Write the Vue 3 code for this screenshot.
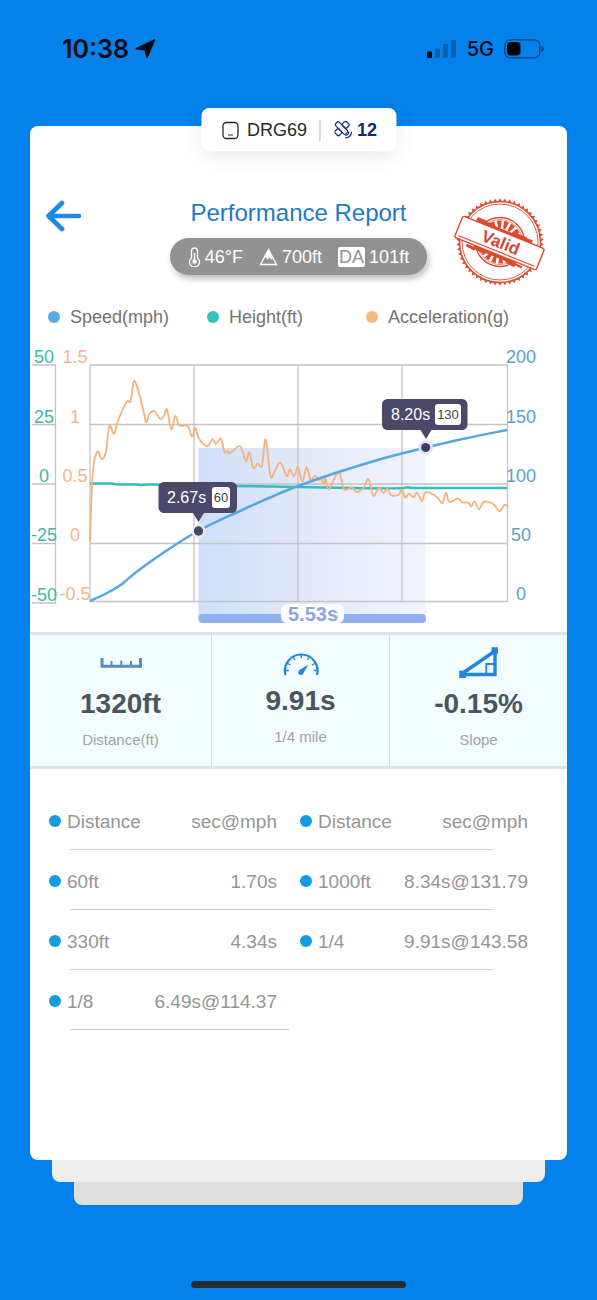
<script setup>
const legend = [
  { name: 'Speed(mph)', tone: 'speed' },
  { name: 'Height(ft)', tone: 'height' },
  { name: 'Acceleration(g)', tone: 'accel' },
]

const heightTicks = [
  { text: '50', y: 363 },
  { text: '25', y: 423 },
  { text: '0', y: 482 },
  { text: '-25', y: 541 },
  { text: '-50', y: 601 },
]
const accelTicks = [
  { text: '1.5', y: 363 },
  { text: '1', y: 423 },
  { text: '0.5', y: 482 },
  { text: '0', y: 541 },
  { text: '-0.5', y: 600 },
]
const speedTicks = [
  { text: '200', y: 363 },
  { text: '150', y: 423 },
  { text: '100', y: 482 },
  { text: '50', y: 541 },
  { text: '0', y: 600 },
]

const accel = [
  [90, 542], [92.7, 473], [97.3, 451.5], [101.7, 459], [106, 451.7], [109.3, 426], [114, 433.7], [118.3, 420],
  [126.7, 401.7], [130.7, 401.3], [134, 380.7], [140, 396.7], [144, 413.3], [146.3, 422.7], [149.3, 414],
  [154.3, 411], [160.3, 419], [164, 415.7], [167, 409.7], [171.3, 429.3], [175.3, 416], [179.3, 425.3],
  [187.7, 426], [192, 436.7], [195.3, 428], [198.7, 438.3], [207.3, 446.3], [212.3, 439], [216, 444],
  [220.9, 438.8], [224.5, 452], [227.5, 451], [230, 453.3], [240, 446.3], [246, 461.3], [249.3, 452.3],
  [253.3, 468], [257.7, 463.7], [262, 465.7], [265.7, 439.3], [270.3, 475.3], [273.5, 474], [278.7, 463.3],
  [282.3, 465.3], [286.7, 476.3], [290, 469.3], [294, 476.7], [298, 467], [302.3, 481.7], [306.7, 467.3],
  [310.7, 480], [315, 475.3], [318.3, 480], [320.7, 478.3], [323.7, 484.3], [325.3, 478.3], [328.7, 489.3],
  [336.7, 474], [339.7, 473.7], [344.3, 489.3], [351.7, 487.3], [356.7, 492], [364, 487.3], [368.5, 479],
  [373.3, 495.7], [379, 487.8], [383.5, 493.3], [387.3, 488.3], [391, 495], [398.3, 495], [401.7, 489.7],
  [405.3, 497.7], [409, 493.7], [413.3, 497.3], [417.3, 492.7], [422, 501.3], [425.7, 492.3], [436.7, 496.7],
  [442.3, 503.3], [446, 492.7], [449.3, 502], [457.7, 498.3], [462, 502.3], [468, 502.7], [471.3, 506.3],
  [474.7, 501.3], [479, 509.3], [484, 501.7], [493.3, 504], [499.3, 511.3], [504.3, 505], [507, 506],
]
const speed = [
  [90, 601], [107, 593], [122, 584], [137, 571.5], [163, 553], [198, 531], [240, 511], [270, 497.5],
  [298, 486], [337, 472.5], [390, 456.5], [426, 447.5], [465, 438.5], [507, 430],
]
const height = [
  [90, 483.5], [112, 483.5], [118, 484.5], [136, 484.5], [142, 485.2], [150, 484.5], [190, 485.5], [240, 486],
  [298, 487], [350, 488], [398, 488.3], [408, 487.3], [420, 488], [507, 488],
]

// Smooth curve through all points, with control handles a fraction of the neighbour distance
function curve(points) {
  let d = `M${points[0][0]} ${points[0][1]}`
  for (let i = 0; i < points.length - 1; i++) {
    const a = points[Math.max(i - 1, 0)]
    const b = points[i]
    const c = points[i + 1]
    const e = points[Math.min(i + 2, points.length - 1)]
    const k = 1 / 6
    d += `C${b[0] + (c[0] - a[0]) * k} ${b[1] + (c[1] - a[1]) * k} ${c[0] - (e[0] - b[0]) * k} ${c[1] - (e[1] - b[1]) * k} ${c[0]} ${c[1]}`
  }
  return d
}

const teeth = Array.from({ length: 54 }, (_, i) => i * (360 / 54))
const spokes = [-150, -132, -112, -92, -72, -52, -32, 30, 48, 68, 88, 108, 128, 148]

const rows = [
  ['60ft', '1.70s', '1000ft', '8.34s@131.79'],
  ['330ft', '4.34s', '1/4', '9.91s@143.58'],
  ['1/8', '6.49s@114.37'],
]
</script>

<template>
  <div class="screen">
    <header class="status">
      <div class="clock">
        <span>10:38</span>
        <svg width="21" height="20" viewBox="0 0 21 20" stroke="#050a14" stroke-width="1.600" stroke-linejoin="round" fill="#050a14" aria-hidden="true">
          <path d="M1.300 9.800 19.500 1 12 18.500 10.200 10.800Z" />
        </svg>
      </div>
      <div class="signals">
        <svg width="30" height="18" viewBox="0 0 30 18" aria-hidden="true">
          <rect x="0" y="11.500" width="5" height="6.500" rx="1.200" />
          <g opacity=".25">
            <rect x="8" y="8.500" width="5" height="9.500" rx="1.200" />
            <rect x="16" y="4" width="5" height="14" rx="1.200" />
            <rect x="24" y="0" width="5" height="18" rx="1.200" />
          </g>
        </svg>
        <span>5G</span>
        <svg width="41" height="20" viewBox="0 0 41 20" aria-hidden="true">
          <rect x=".8" y=".8" width="35" height="18" rx="5.500" fill="none" stroke="#000" stroke-opacity=".5" stroke-width="1.200" />
          <rect x="3" y="3" width="13.500" height="13.500" rx="4" />
          <path d="M37.500 7c3 .8 3 5.200 0 6z" opacity=".5" />
        </svg>
      </div>
    </header>

    <main class="card">
      <div class="tab">
        <svg width="18" height="19" viewBox="0 0 18 19" fill="none" stroke="#24282c" aria-hidden="true">
          <rect x="1.500" y="1.500" width="15" height="16" rx="3.500" stroke-width="1.300" />
          <path d="M6.500 14h5" stroke-width="1.200" />
        </svg>
        <span class="device">DRG69</span>
        <i class="bar"></i>
        <svg width="18" height="18" viewBox="0 0 18 18" fill="none" stroke="#14296a" stroke-width="1.200" stroke-linejoin="round" aria-hidden="true">
          <g transform="rotate(45 7.500 7.500)">
            <rect x="-.5" y="5" width="14.500" height="5" rx="1.500" />
          </g>
          <g transform="rotate(-45 7.500 7.500)">
            <rect x="10" y="4.500" width="5.500" height="6" rx="1.500" />
            <rect x="-.5" y="4.500" width="5.500" height="6" rx="1.500" />
          </g>
          <path d="M10.800 14.300c2-.2 3.400-1.600 3.600-3.600M10.800 17c3.400-.3 6-2.900 6.300-6.300" />
        </svg>
        <span class="sats">12</span>
      </div>

      <section class="head">
        <button class="back" type="button" aria-label="Back">
          <svg width="38" height="32" viewBox="0 0 38 32" fill="none" stroke="#1f8ae6" stroke-width="4.600" stroke-linecap="round" stroke-linejoin="round" aria-hidden="true">
            <path d="M34 16H4M17 3 3.500 16 17 29" />
          </svg>
        </button>
        <div class="middle">
          <h1>Performance Report</h1>
          <div class="weather">
            <span class="fact">
              <svg width="13" height="20" viewBox="0 0 13 20" fill="none" stroke="#fff" aria-hidden="true">
                <path d="M3.500 11V4a3 3 0 0 1 6 0v7a5 5 0 1 1-6 0Z" stroke-width="1.300" />
                <path d="M6.500 6v8" stroke-width="1.300" />
                <circle cx="6.500" cy="14.500" r="2.200" fill="#fff" stroke="none" />
              </svg>46°F
            </span>
            <span class="fact">
              <svg width="19" height="18" viewBox="0 0 19 18" aria-hidden="true">
                <path d="M9.500 1.500 1.500 16.500h16Z" fill="none" stroke="#fff" stroke-width="1.300" />
                <path d="M9.500 1.500 4.500 11l2.500-2 1.500 3 2-3 1.500 2.500 2-1.200Z" fill="#fff" />
              </svg>700ft
            </span>
            <span class="fact"><b class="da">DA</b>101ft</span>
          </div>
        </div>
        <svg class="stamp" width="92" height="92" viewBox="454.500 197 92 92" role="img" aria-label="Valid">
          <g fill="none" stroke="#d94a2f">
            <circle cx="500.500" cy="242" r="40.500" stroke-width="1.500" />
            <circle cx="500.500" cy="242" r="38" stroke-width=".9" />
            <circle cx="500.500" cy="242" r="24.500" stroke-width="1.300" />
            <circle cx="500.500" cy="242" r="22.500" stroke-width=".6" />
          </g>
          <path v-for="t in teeth" :key="t" d="M498.700 201.500l1.800-3.300 1.800 3.300z" fill="#d94a2f" :transform="`rotate(${t} 500.500 242)`" />
          <path v-for="s in spokes" :key="s" d="M514 240.800l8-1.200v4.800l-8-1.200z" fill="#d94a2f" :transform="`rotate(${s} 500.500 242)`" />
          <g transform="rotate(22 500 243)">
            <path d="M470 227h9l1 1.500 6-1 2 1.500h23l1-1.500h11l1 1 6-.5v4h-60zM470 256h7l1-1.500h44l2 1.500h6v2.500l-7-.5-1 2-8-1-2-1.500h-24l-2 1-6-.5-1 1.500-9-1z" fill="#d94a2f" />
            <rect x="456" y="231.500" width="88" height="23" rx="2" fill="#fff" stroke="#d94a2f" stroke-width="1.400" />
            <path d="M459 251.500h82" stroke="#d94a2f" stroke-width="1" />
            <text x="501" y="248" text-anchor="middle" class="valid">Valid</text>
          </g>
        </svg>
      </section>

      <ul class="legend">
        <li v-for="item in legend" :key="item.name"><i :class="item.tone"></i>{{ item.name }}</li>
      </ul>

      <svg class="chart" viewBox="30 340 537 292" role="img" aria-label="Speed, height and acceleration over time">
        <defs>
          <linearGradient id="span-fill" x1="0" x2="1" y1="0" y2="0">
            <stop offset="0" stop-color="#cddff8" />
            <stop offset=".45" stop-color="#e3e8fa" />
            <stop offset="1" stop-color="#f2f4fe" />
          </linearGradient>
        </defs>
        <rect x="198.500" y="448" width="227.500" height="171" fill="url(#span-fill)" />
        <g fill="none" stroke="#c4c4c6" stroke-width="1.300">
          <path d="M90 365H507.500V601.500H90ZM90 424.500H507M90 484H507M90 543.500H507M194 365V601M298 365V601M402 365V601" />
          <path d="M32 365H55.500V603H32M32 424.500H55M32 484H55M32 543.500H55" />
        </g>
        <rect x="198.500" y="614" width="227.500" height="9" rx="4" fill="#8fb1f1" />
        <rect x="281" y="604" width="63" height="19" rx="6" fill="#fff" />
        <text x="313" y="621" text-anchor="middle" class="delta">5.53s</text>

        <g class="tick" fill="#3fb8a9" text-anchor="middle">
          <text v-for="t in heightTicks" :key="t.y" x="44" :y="t.y">{{ t.text }}</text>
        </g>
        <g class="tick" fill="#f0b78b" text-anchor="middle">
          <text v-for="t in accelTicks" :key="t.y" x="75" :y="t.y">{{ t.text }}</text>
        </g>
        <g class="tick" fill="#5a9fca" text-anchor="middle">
          <text v-for="t in speedTicks" :key="t.y" x="521" :y="t.y">{{ t.text }}</text>
        </g>

        <g fill="none" stroke-linejoin="round">
          <path :d="curve(height)" stroke="#35bdbb" stroke-width="2.400" />
          <path :d="curve(accel)" stroke="#f5b27a" stroke-width="1.800" />
          <path :d="curve(speed)" stroke="#57a7dd" stroke-width="2.500" />
        </g>

        <g>
          <path d="M164 482h67.500a5.500 5.500 0 0 1 5.500 5.500v20a5.500 5.500 0 0 1-5.500 5.500H204l-5.500 9-5.500-9H164a5.500 5.500 0 0 1-5.500-5.500v-20a5.500 5.500 0 0 1 5.500-5.500Z" fill="#4b4869" />
          <text x="167" y="503" class="tip">2.67s</text>
          <rect x="212" y="487" width="18" height="21" rx="3" fill="#fff" />
          <text x="221" y="502" text-anchor="middle" class="tip-value">60</text>
          <circle cx="198.500" cy="531" r="7" fill="#e9eefb" />
          <circle cx="198.500" cy="531" r="4.700" fill="#454568" />
        </g>
        <g>
          <path d="M387.500 399H462a5.500 5.500 0 0 1 5.500 5.500v20a5.500 5.500 0 0 1-5.500 5.500H431.500l-5.500 9-5.500-9H387.500a5.500 5.500 0 0 1-5.500-5.500v-20a5.500 5.500 0 0 1 5.500-5.500Z" fill="#4b4869" />
          <text x="391" y="420" class="tip">8.20s</text>
          <rect x="435" y="404" width="26" height="21" rx="3" fill="#fff" />
          <text x="448" y="419" text-anchor="middle" class="tip-value">130</text>
          <circle cx="425.700" cy="447.500" r="7.200" fill="#dfe1f3" />
          <circle cx="425.700" cy="447.500" r="4.500" fill="#403c72" />
        </g>
      </svg>

      <section class="stats">
        <div class="stat">
          <svg width="44" height="32" viewBox="98 647 44 32" fill="none" stroke="#4f90c6" aria-hidden="true">
            <path d="M101 658v8.200h38.500V658" stroke-width="3" />
            <path d="M110.500 661v4M120.300 660.500v4.500M130 661v4" stroke-width="2" />
          </svg>
          <strong>1320ft</strong>
          <span>Distance(ft)</span>
        </div>
        <div class="stat raised">
          <svg width="36" height="26" viewBox="282 652 36 26" fill="none" stroke="#1b86dd" aria-hidden="true">
            <path d="M284.500 675A16.300 16.300 0 1 1 316 675" stroke-width="2.200" />
            <path d="M300.300 655v3M292.500 657.500l1.500 2.500M308 657.500l-1.500 2.500M287 663.500l2.500 1.500M313.500 663.500l-2.500 1.500M285 670.500h3M315.500 670.500h-3" stroke-width="1.400" />
            <path d="M307.500 664.500 302.500 673a2.700 2.700 0 1 1-3.500-3.200Z" fill="#1b86dd" stroke="none" />
          </svg>
          <strong>9.91s</strong>
          <span>1/4 mile</span>
        </div>
        <div class="stat">
          <svg width="40" height="32" viewBox="458 647 40 32" fill="none" stroke="#1f87df" aria-hidden="true">
            <path d="M462 673 494 651V674.500H462" stroke-width="3.400" />
            <path d="M493 664H485.300V673" stroke-width="1.800" />
            <path d="M490.500 647.200h6.500v6.500h-6.500zM458.200 670.700h6.800v7.300h-6.800z" fill="#1f87df" stroke="none" />
          </svg>
          <strong>-0.15%</strong>
          <span>Slope</span>
        </div>
      </section>

      <table class="splits">
        <thead>
          <tr>
            <th class="name"><i class="dot"></i>Distance</th>
            <th class="time">sec@mph</th>
            <th class="name"><i class="dot"></i>Distance</th>
            <th class="time last">sec@mph</th>
          </tr>
        </thead>
        <tbody>
          <tr v-for="row in rows" :key="row[0]" :class="{ half: row.length < 3 }">
            <td class="name"><i class="dot"></i>{{ row[0] }}</td>
            <td class="time">{{ row[1] }}</td>
            <template v-if="row.length > 2">
              <td class="name"><i class="dot"></i>{{ row[2] }}</td>
              <td class="time last">{{ row[3] }}</td>
            </template>
          </tr>
        </tbody>
      </table>
    </main>

    <div class="sheet second"></div>
    <div class="sheet third"></div>
    <footer class="home"><i></i></footer>
  </div>
</template>

<style>
body {
  margin: 0;
  background: #0282ea;
}
</style>

<style scoped>
.screen {
  box-sizing: border-box;
  min-height: 100vh;
  display: flex;
  flex-direction: column;
  background: #0282ea;
  font-family: "Liberation Sans", Arial, sans-serif;
  color: #737373;
}
.status {
  display: flex;
  justify-content: space-between;
  align-items: center;
  height: 97px;
  padding: 0 52px 29px 62px;
  font-family: Inter, sans-serif;
  color: #050a14;
}
.clock {
  display: flex;
  align-items: center;
  gap: 6px;
  font-size: 25px;
  font-weight: 600;
}
.signals {
  display: flex;
  align-items: center;
  gap: 10px;
  font-size: 20px;
  font-weight: 500;
}
.card {
  position: relative;
  z-index: 3;
  flex: 1;
  margin: 0 30px;
  padding-top: 71px;
  background: #fff;
  border-radius: 8px;
}
.tab {
  position: absolute;
  top: -18px;
  left: 50%;
  transform: translateX(-50%);
  box-sizing: border-box;
  height: 43px;
  padding: 1px 19px 0 20px;
  display: flex;
  align-items: center;
  gap: 8px;
  background: #fff;
  border-radius: 8px;
  box-shadow: 0 4px 20px rgba(60, 70, 80, 0.12);
  white-space: nowrap;
  font-size: 18px;
}
.device {
  color: #24282c;
}
.bar {
  width: 1px;
  height: 21px;
  margin: 0 6px 0 4px;
  background: #b5b5b5;
}
.tab .sats {
  margin-left: -3px;
  color: #14296a;
  font-weight: 700;
}
.head {
  display: grid;
  grid-template-columns: 1fr auto 1fr;
  align-items: start;
}
.back {
  justify-self: start;
  margin: 3px 0 0 15px;
  padding: 0;
  border: 0;
  background: none;
  line-height: 0;
  cursor: pointer;
}
.middle {
  display: flex;
  flex-direction: column;
  align-items: center;
}
h1 {
  margin: 0;
  font-size: 24px;
  line-height: 32px;
  font-weight: 400;
  color: #1e7ac8;
}
.weather {
  box-sizing: border-box;
  display: flex;
  align-items: center;
  gap: 16px;
  margin-top: 9px;
  padding: 1px 18px 0;
  height: 37px;
  border-radius: 19px;
  background: #929292;
  box-shadow: 2px 4px 6px rgba(0, 0, 0, 0.25);
  color: #fff;
  font-size: 18px;
  white-space: nowrap;
}
.fact {
  display: flex;
  align-items: center;
  gap: 4px;
}
.da {
  padding: 0 1px;
  border-radius: 2px;
  background: #fff;
  color: #929292;
  line-height: 20px;
  font-weight: 400;
}
.stamp {
  justify-self: end;
  margin-right: 21px;
}
.valid {
  font-size: 17px;
  font-weight: 700;
  fill: #d4482f;
}
.legend {
  display: grid;
  grid-template-columns: repeat(3, 1fr);
  margin: 16px 42px 0 18px;
  padding: 0;
  list-style: none;
  font-size: 18px;
  line-height: 24px;
}
.legend li {
  display: flex;
  align-items: center;
  gap: 10px;
  white-space: nowrap;
}
.legend i {
  width: 12px;
  height: 12px;
  border-radius: 50%;
}
.speed {
  background: #5aaae4;
}
.height {
  background: #36bfbc;
}
.accel {
  background: #fbb982;
}
.chart {
  display: block;
  width: 100%;
  margin-top: 11px;
}
.tick {
  font-size: 18px;
}
.delta {
  font-size: 20px;
  font-weight: 700;
  fill: #8da6de;
}
.tip {
  font-size: 16px;
  fill: #fff;
}
.tip-value {
  font-size: 13px;
  fill: #444;
}
.stats {
  display: grid;
  grid-template-columns: 181fr 178fr 178fr;
  background: #f3fcfe;
  border-top: 3px solid #d9e5e7;
  border-bottom: 3px solid #d9e5e7;
}
.stat {
  display: flex;
  flex-direction: column;
  align-items: center;
  padding: 12px 0 16px;
}
.stat + .stat {
  border-left: 1px solid #d3dfe2;
}
.stat strong {
  margin-top: 9px;
  font-size: 28px;
  line-height: 32px;
  color: #4b555e;
}
.stat span {
  margin-top: 10px;
  font-size: 15px;
  line-height: 20px;
  color: #a0a4a6;
}
.raised {
  padding-top: 17px;
}
.raised strong {
  margin-top: 7px;
}
.splits {
  display: block;
  margin: 21px 39px 0 19px;
  font-size: 19px;
  color: #959595;
}
.splits thead,
.splits tbody {
  display: block;
}
.splits tr {
  position: relative;
  display: grid;
  grid-template-columns: 96fr 132fr 119fr 132fr;
  height: 60px;
  line-height: 64px;
}
.splits tr::after {
  content: "";
  position: absolute;
  left: 21px;
  right: 35px;
  bottom: 0;
  height: 1px;
  background: #cfcfcf;
}
.splits tr.half::after {
  right: 50%;
}
.splits th,
.splits td {
  padding: 0;
  font-weight: 400;
  white-space: nowrap;
}
.name {
  text-align: left;
}
.time {
  text-align: right;
}
.time + .name {
  padding-left: 23px;
}
.dot {
  display: inline-block;
  width: 12px;
  height: 12px;
  margin-right: 6px;
  border-radius: 50%;
  background: #149ce0;
  vertical-align: 1px;
}
.sheet {
  border-radius: 0 0 8px 8px;
}
.second {
  height: 22px;
  margin: 0 52px;
  background: #eee;
}
.third {
  height: 23px;
  margin: 0 74px;
  background: #dedede;
}
.home {
  display: flex;
  justify-content: center;
  padding: 76px 0 12px;
}
.home i {
  width: 36%;
  height: 7px;
  border-radius: 4px;
  background: #262c33;
}
</style>
